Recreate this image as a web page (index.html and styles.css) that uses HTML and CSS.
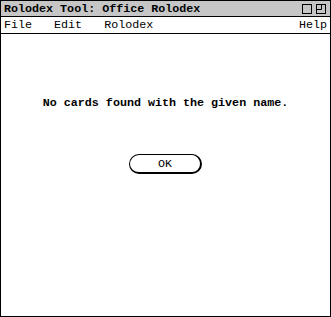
FILE: index.html
```html
<!DOCTYPE html>
<html lang="en">
<head>
  <meta charset="UTF-8">
  <title>Rolodex Tool: Office Rolodex</title>
  <link rel="stylesheet" href="styles.css">
</head>
<body>
  <div class="window">
    <div class="titlebar">
      <span class="title">Rolodex Tool: Office Rolodex</span>
      <span class="controls">
        <svg width="10" height="10" viewBox="0 0 10 10"><rect x="0.5" y="0.5" width="9" height="9" fill="none" stroke="#000"/></svg>
        <svg width="10" height="10" viewBox="0 0 10 10"><rect x="0.5" y="0.5" width="9" height="9" fill="none" stroke="#000"/><path d="M0.5 5.5H5.5V0.5" fill="none" stroke="#000"/></svg>
      </span>
    </div>
    <div class="menubar">
      <span class="menu">File</span>
      <span class="menu">Edit</span>
      <span class="menu">Rolodex</span>
      <span class="menu help">Help</span>
    </div>
    <div class="content">
      <p class="message">No cards found with the given name.</p>
      <button class="ok">OK</button>
    </div>
  </div>
</body>
</html>
```

FILE: styles.css
```css
body {
  margin: 0;
  background: #fff;
  font-family: 'Liberation Mono', 'DejaVu Sans Mono', monospace;
  font-size: 11.7px;
  color: #000;
}

.window {
  width: 331px;
  height: 317px;
  box-sizing: border-box;
  border: 1px solid #000;
  display: flex;
  flex-direction: column;
}

.titlebar {
  height: 15px;
  background: #c6c6c6;
  border-bottom: 1px solid #000;
  display: flex;
  align-items: center;
  padding: 0 4px 0 3px;
}

.title {
  font-weight: bold;
  flex: 1;
}

.controls {
  display: flex;
  gap: 4px;
}

.controls svg {
  display: block;
}

.menubar {
  height: 16px;
  border-bottom: 1px solid #000;
  display: flex;
  align-items: center;
  padding: 0 3px;
}

.menu {
  margin-right: 22px;
}

.menu.help {
  margin-left: auto;
  margin-right: 0;
}

.content {
  flex: 1;
  display: flex;
  flex-direction: column;
  align-items: center;
}

.message {
  font-weight: bold;
  margin: 62px 0 0;
}

.ok {
  margin-top: 44px;
  width: 73px;
  height: 20px;
  font-family: inherit;
  font-size: 11.7px;
  background: #fff;
  color: #000;
  border: 1px solid #000;
  border-right-width: 2px;
  border-bottom-width: 2px;
  border-radius: 10px;
  padding: 0;
}
```
